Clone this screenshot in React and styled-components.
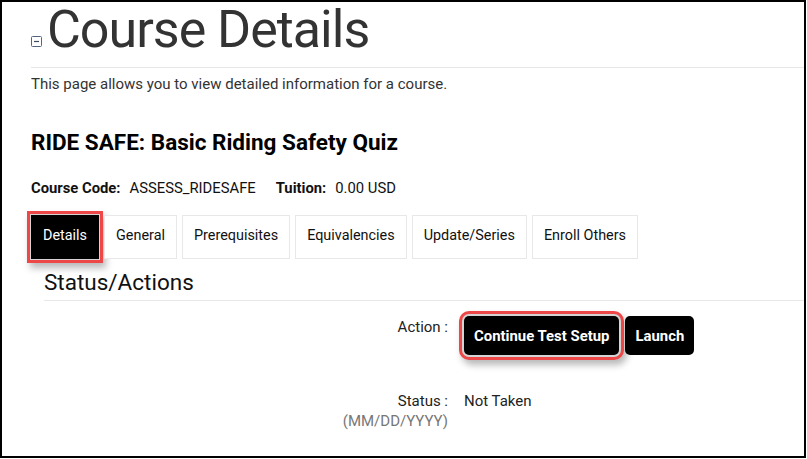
import React from "react";
import styled, { createGlobalStyle, css } from "styled-components";

const GlobalStyle = createGlobalStyle`
  html, body {
    margin: 0;
    padding: 0;
    background: #fff;
  }
  body {
    font-family: Roboto, "Liberation Sans", Arial, sans-serif;
    color: #222;
  }
`;

const tabs = ["Details", "General", "Prerequisites", "Equivalencies", "Update/Series", "Enroll Others"];

const CollapseIcon = () => (
  <svg width="12" height="12" viewBox="0 0 12 12">
    <rect x="0.5" y="0.5" width="10" height="10" rx="1" fill="#fff" stroke="#55657f" />
    <line x1="3" y1="5.5" x2="8" y2="5.5" stroke="#3c4a60" strokeWidth="1.2" />
  </svg>
);

const App = () => {
  return (
    <>
      <GlobalStyle />
      <Frame>
        <TitleRow>
          <IconWrap>
            <CollapseIcon />
          </IconWrap>
          <PageTitle>Course Details</PageTitle>
        </TitleRow>
        <Intro>This page allows you to view detailed information for a course.</Intro>

        <CourseName>RIDE SAFE: Basic Riding Safety Quiz</CourseName>
        <Meta>
          <MetaLabel>Course Code:</MetaLabel>
          <MetaValue>ASSESS_RIDESAFE</MetaValue>
          <MetaLabel>Tuition:</MetaLabel>
          <MetaValue>0.00 USD</MetaValue>
        </Meta>

        <TabBar>
          {tabs.map((t, i) => (
            <Tab key={t} $active={i === 0} $ring={i === 0 ? 4 : 0}>
              {t}
            </Tab>
          ))}
        </TabBar>

        <Section>
          <SectionTitle>Status/Actions</SectionTitle>
          <FieldGrid>
            <FieldLabel>Action :</FieldLabel>
            <Actions>
              <ActionButton $ring={5}>Continue Test Setup</ActionButton>
              <ActionButton>Launch</ActionButton>
            </Actions>

            <FieldLabel $spaced>
              Status :
              <Hint>(MM/DD/YYYY)</Hint>
            </FieldLabel>
            <FieldValue $spaced>Not Taken</FieldValue>
          </FieldGrid>
        </Section>
      </Frame>
    </>
  );
};

export default App;

const highlight = css`
  box-shadow: 0 0 0 ${(p) => p.$ring - 3}px #d4d4d4,
    0 0 0 ${(p) => p.$ring}px #ee4747,
    3px 5px 7px ${(p) => p.$ring}px rgba(0, 0, 0, 0.28);
`;

const Frame = styled.div`
  box-sizing: border-box;
  width: 806px;
  height: 458px;
  border: 2px solid #000;
  padding-left: 29px;
  overflow: hidden;
`;

const TitleRow = styled.div`
  display: flex;
  align-items: flex-end;
  gap: 4px;
  border-bottom: 1px solid #e6e6e6;
  padding-bottom: 9px;
`;

const IconWrap = styled.div`
  display: flex;
  margin-bottom: 10px;
`;

const PageTitle = styled.h1`
  margin: 0;
  font-size: 52px;
  line-height: 56px;
  letter-spacing: -1px;
  font-weight: 400;
  color: #333;
`;

const Intro = styled.p`
  margin: 6px 0 0;
  font-size: 15px;
  line-height: 20px;
  color: #333;
`;

const CourseName = styled.h2`
  margin: 34px 0 0;
  font-size: 22.5px;
  line-height: 28px;
  font-weight: 700;
  color: #000;
`;

const Meta = styled.div`
  display: flex;
  align-items: baseline;
  margin-top: 22px;
  font-size: 14.8px;
  line-height: 20px;
  color: #111;
`;

const MetaLabel = styled.span`
  font-weight: 700;
  margin-right: 9px;
`;

const MetaValue = styled.span`
  margin-right: 20px;
`;

const TabBar = styled.div`
  display: flex;
  gap: 5px;
  margin-top: 17px;
`;

const Tab = styled.div`
  box-sizing: border-box;
  height: 44px;
  padding: 10px 11px 12px;
  font-size: 14.4px;
  line-height: 20px;
  border: 1px solid ${(p) => (p.$active ? "#000" : "#e8e8e8")};
  background: ${(p) => (p.$active ? "#000" : "#fff")};
  color: ${(p) => (p.$active ? "#fff" : "#111")};
  ${(p) => p.$ring && highlight}
`;

const Section = styled.div`
  margin: 10px 0 0 13px;
`;

const SectionTitle = styled.h3`
  margin: 0;
  font-size: 22.5px;
  line-height: 26px;
  font-weight: 400;
  color: #111;
  padding-bottom: 5px;
  border-bottom: 1px solid #e8e8e8;
`;

const FieldGrid = styled.div`
  display: grid;
  grid-template-columns: 404px 1fr;
  column-gap: 16px;
  margin-top: 15px;
  font-size: 15px;
  line-height: 20px;
  color: #222;
`;

const FieldLabel = styled.div`
  display: flex;
  flex-direction: column;
  align-items: flex-end;
  padding-top: 1px;
  margin-top: ${(p) => (p.$spaced ? "35px" : "0")};
`;

const Hint = styled.span`
  color: #777;
  line-height: 21px;
`;

const FieldValue = styled.div`
  padding-top: 1px;
  margin-top: ${(p) => (p.$spaced ? "35px" : "0")};
`;

const Actions = styled.div`
  display: flex;
  gap: 6px;
`;

const ActionButton = styled.button`
  height: 39px;
  padding: 0 10px;
  border: none;
  border-radius: 5px;
  background: #000;
  color: #fff;
  font-family: Roboto, "Liberation Sans", Arial, sans-serif;
  font-size: 14.9px;
  font-weight: 700;
  cursor: pointer;
  ${(p) => p.$ring && highlight}
`;
